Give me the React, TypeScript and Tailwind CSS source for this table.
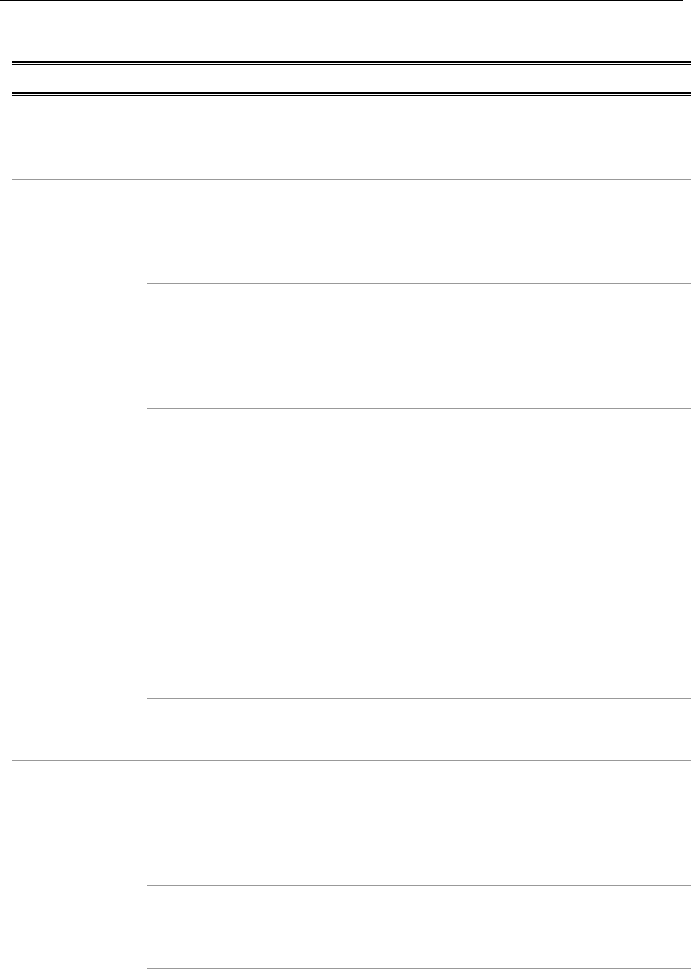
const DoubleRule = () => (
  <div className="h-[4px] border-t-2 border-b border-black" />
);

const SubRow = ({ h, border = true }: { h: string; border?: boolean }) => (
  <div className={`${h} ${border ? "border-b border-[#999999]" : ""}`} />
);

const App = () => {
  return (
    <div className="h-[969px] w-[691px] overflow-hidden bg-white font-['Liberation_Serif',serif]">
      {/* page header rule */}
      <div className="h-px w-[683px] bg-black" />

      <div className="mt-[60px] pl-3">
        {/* table head */}
        <DoubleRule />
        <div className="h-[27px]" />
        <DoubleRule />

        {/* first row */}
        <div className="h-[84px] border-b border-[#999999]" />

        {/* group one */}
        <div className="flex border-b border-[#999999]">
          <div className="w-[135px] shrink-0" />
          <div className="flex flex-1 flex-col">
            <SubRow h="h-[104px]" />
            <SubRow h="h-[125px]" />
            <SubRow h="h-[290px]" />
            <SubRow h="h-[61px]" border={false} />
          </div>
        </div>

        {/* group two */}
        <div className="flex">
          <div className="w-[135px] shrink-0" />
          <div className="flex flex-1 flex-col">
            <SubRow h="h-[125px]" />
            <SubRow h="h-[83px]" />
          </div>
        </div>
      </div>
    </div>
  );
};

export default App;
